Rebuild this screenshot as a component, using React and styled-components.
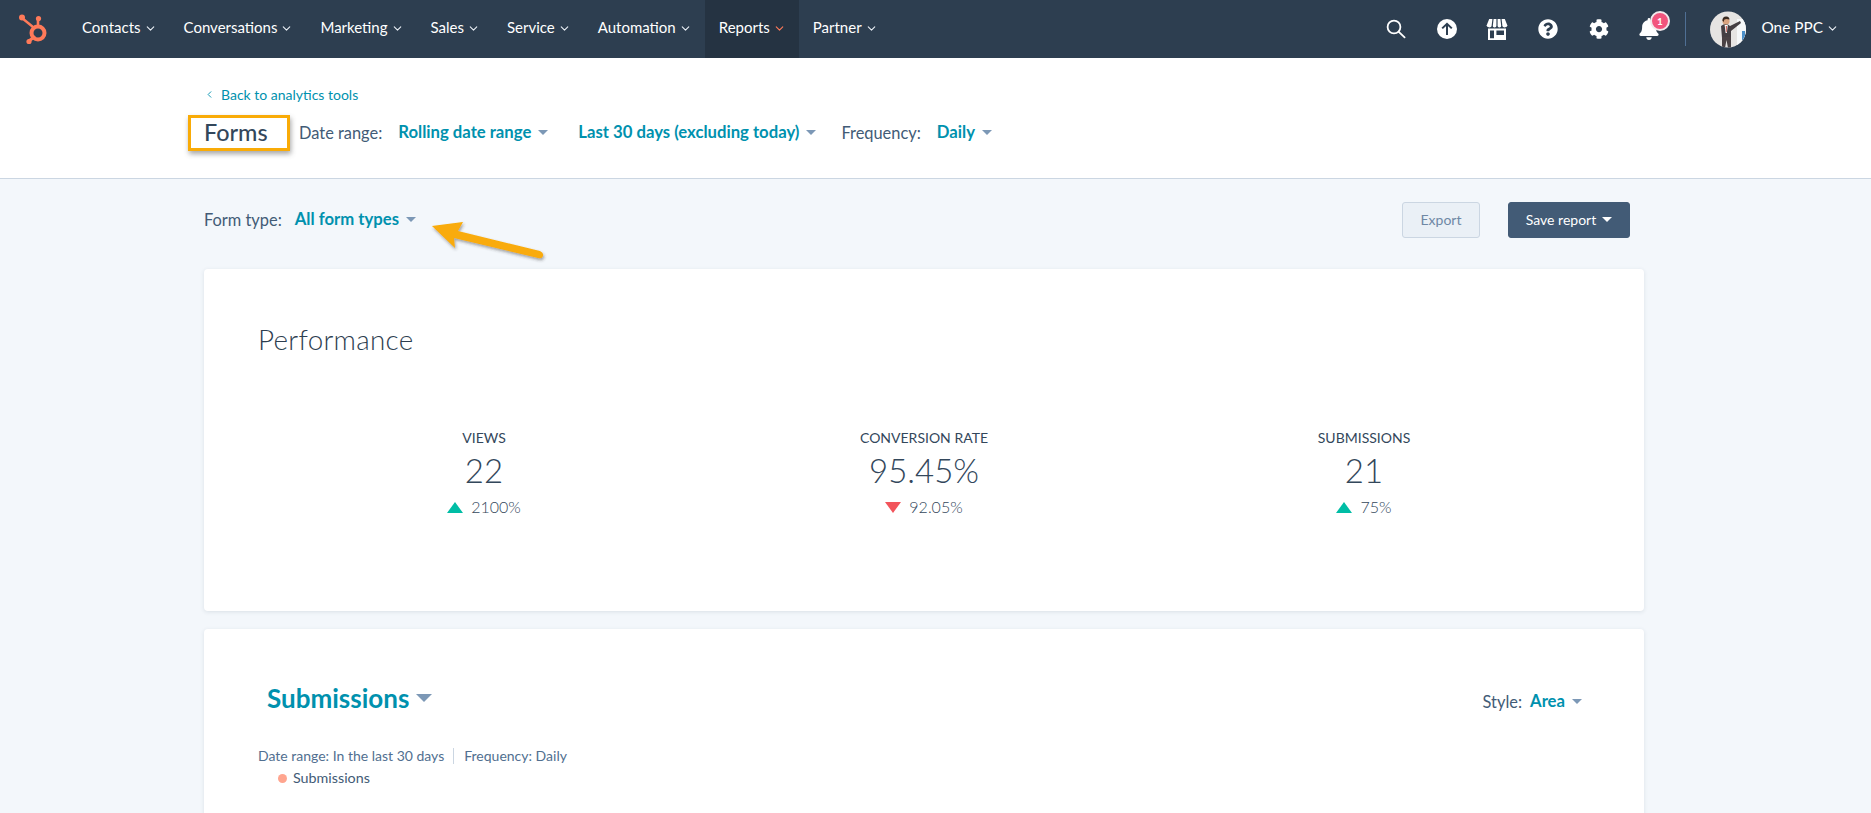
import React from 'react';
import styled, { createGlobalStyle } from 'styled-components';
import { FaBell, FaCog, FaQuestionCircle } from 'react-icons/fa';
import { FiChevronDown, FiChevronLeft } from 'react-icons/fi';

const GlobalStyle = createGlobalStyle`
    html, body {
        margin: 0;
        padding: 0;
        height: 100%;
        overflow: hidden;
    }
    body {
        font-family: "Lato", "Open Sans", sans-serif;
        color: #33475b;
        background-color: #f3f7fb;
    }
    * {
        box-sizing: border-box;
    }
`;

const Page = styled.div`
    position: relative;
    height: 813px;
    overflow: hidden;
`;

const Nav = styled.nav`
    height: 58px;
    display: flex;
    align-items: stretch;
    background-color: #2d3e50;
`;

const LogoBox = styled.div`
    width: 68px;
    flex: none;
`;

const NavItem = styled.div`
    display: flex;
    align-items: center;
    gap: 3px;
    padding: 0 13px 4px 14px;
    font-size: 15px;
    color: #fff;
    background-color: ${(props) => (props.$active ? '#253342' : 'transparent')};
    svg {
        color: ${(props) => (props.$active ? '#ff7a59' : '#eaf0f6')};
        margin-top: 3px;
    }
`;

const NavRight = styled.div`
    margin-left: auto;
    padding-right: 32px;
    display: flex;
    align-items: center;
`;

const IconSlot = styled.div`
    position: relative;
    width: 50.6px;
    height: 58px;
    display: flex;
    align-items: center;
    justify-content: center;
    color: #fff;
`;

const Badge = styled.span`
    position: absolute;
    top: 11px;
    left: 26px;
    width: 20px;
    height: 20px;
    border-radius: 50%;
    border: 2px solid #f3e9ec;
    background-color: #f2547d;
    color: #fff;
    font-size: 10px;
    font-weight: 700;
    display: flex;
    align-items: center;
    justify-content: center;
`;

const NavDivider = styled.div`
    width: 1px;
    height: 34px;
    margin: 0 24px 0 11px;
    background-color: #4f6f94;
`;

const UserName = styled.div`
    margin-left: 15px;
    display: flex;
    align-items: center;
    gap: 3px;
    padding-bottom: 4px;
    font-size: 15.4px;
    color: #fff;
    svg {
        color: #eaf0f6;
        margin-top: 3px;
    }
`;

const Header = styled.header`
    height: 121px;
    padding: 26px 0 0 204px;
    background-color: #fff;
    border-bottom: 1px solid #cbd6e2;
`;

const BackLink = styled.div`
    height: 20px;
    display: flex;
    align-items: center;
    gap: 6px;
    margin-bottom: 10px;
    font-size: 14px;
    color: #0091ae;
`;

const FilterRow = styled.div`
    display: flex;
    align-items: center;
`;

const TitleBox = styled.div`
    width: 102px;
    height: 36px;
    margin: 1px 9px -1px -16px;
    padding: 0 0 3px 13px;
    display: flex;
    align-items: center;
    border: 3px solid #f9ab07;
    box-shadow: 1px 3px 5px rgba(60, 60, 60, 0.45);
    font-size: 23.4px;
    font-weight: 500;
    color: #33475b;
`;

const FilterLabel = styled.span`
    margin-right: ${(props) => props.$gap || 16}px;
    font-size: 16.4px;
    color: #425b76;
`;

const DropLink = styled.span`
    display: flex;
    align-items: center;
    gap: 7px;
    margin-right: ${(props) => props.$after || 0}px;
    font-size: 16.7px;
    font-weight: 700;
    color: #0091ae;
`;

const Caret = styled.i`
    width: 0;
    height: 0;
    border-left: ${(props) => props.$size || 5}px solid transparent;
    border-right: ${(props) => props.$size || 5}px solid transparent;
    border-top: ${(props) => props.$size || 5}px solid ${(props) => props.$color || '#7c98b6'};
`;

const Content = styled.main`
    width: 1440px;
    margin-left: 204px;
`;

const Toolbar = styled.div`
    height: 36px;
    margin: 23px 0 31px;
    padding-right: 14px;
    display: flex;
    align-items: center;
`;

const FormTypeFilter = styled.div`
    display: flex;
    align-items: center;
    padding-bottom: 2px;
`;

const ButtonGroup = styled.div`
    margin-left: auto;
    display: flex;
    gap: 28px;
`;

const Button = styled.button`
    height: 36px;
    width: ${(props) => (props.$primary ? 122 : 78)}px;
    padding: 0 0 2px;
    display: flex;
    align-items: center;
    justify-content: center;
    gap: 6px;
    border-radius: 3px;
    border: 1px solid ${(props) => (props.$primary ? '#425b76' : '#cbd6e2')};
    background-color: ${(props) => (props.$primary ? '#425b76' : '#eaf0f6')};
    color: ${(props) => (props.$primary ? '#fff' : '#6f88a5')};
    font-family: inherit;
    font-size: 14px;
`;

const Card = styled.section`
    background-color: #fff;
    border-radius: 4px;
    box-shadow: 0 1px 4px rgba(45, 62, 80, 0.12);
    margin-bottom: 18px;
    height: ${(props) => props.$height}px;
    padding: ${(props) => props.$top}px 62px 0 54px;
`;

const CardTitle = styled.h2`
    margin: 0;
    font-size: 27.8px;
    line-height: 32px;
    font-weight: 300;
    color: #2d3e50;
    letter-spacing: 0.3px;
`;

const Metrics = styled.div`
    margin: 72px 0 0 6px;
    display: grid;
    grid-template-columns: repeat(3, 440px);
`;

const Metric = styled.div`
    display: flex;
    flex-direction: column;
    align-items: center;
`;

const MetricLabel = styled.div`
    font-size: 14px;
    line-height: 20px;
    color: #33475b;
`;

const MetricValue = styled.div`
    margin-top: 2px;
    font-size: 33px;
    line-height: 40px;
    font-weight: 300;
    color: #33475b;
`;

const Delta = styled.div`
    margin-top: 7px;
    display: flex;
    align-items: center;
    gap: 8px;
    font-size: 16px;
    line-height: 20px;
    font-weight: 300;
    color: #33475b;
`;

const Triangle = styled.i`
    width: 0;
    height: 0;
    border-left: 8px solid transparent;
    border-right: 8px solid transparent;
    ${(props) =>
        props.$up
            ? 'border-bottom: 11px solid #00bda5;'
            : 'border-top: 11px solid #f2545b;'}
`;

const ChartHeader = styled.div`
    display: flex;
    align-items: center;
    justify-content: space-between;
    height: 32px;
    padding-left: 9px;
`;

const ChartTitle = styled.div`
    display: flex;
    align-items: center;
    gap: 7px;
    padding-bottom: 2px;
    font-size: 26px;
    font-weight: 700;
    color: #0091ae;
`;

const StylePicker = styled.div`
    display: flex;
    align-items: center;
    padding-top: 4px;
`;

const ChartMeta = styled.div`
    margin-top: 31px;
    display: flex;
    align-items: center;
    font-size: 14px;
    line-height: 20px;
    color: #516f90;
`;

const MetaDivider = styled.span`
    width: 1px;
    height: 16px;
    margin: 0 10px 0 9px;
    background-color: #cbd6e2;
`;

const Legend = styled.div`
    margin: 2px 0 0 20px;
    display: flex;
    align-items: center;
    gap: 6px;
    font-size: 14.3px;
    line-height: 20px;
    color: #425b76;
`;

const LegendDot = styled.i`
    width: 9px;
    height: 9px;
    border-radius: 50%;
    background-color: #ffa58f;
`;

const ArrowMark = styled.svg`
    position: absolute;
    left: 425px;
    top: 215px;
`;

const Logo = () => (
    <svg width="68" height="58" viewBox="0 0 68 58" fill="none">
        <g stroke="#ff7a59" strokeLinecap="round">
            <circle cx="38" cy="33" r="6.5" strokeWidth="4" />
            <path d="M22 18 L33 27" strokeWidth="2.4" />
            <path d="M38 19 V26" strokeWidth="2.6" />
            <path d="M29 41 L34 37" strokeWidth="3" />
        </g>
        <g fill="#ff7a59">
            <circle cx="22" cy="17.5" r="3" />
            <circle cx="38.5" cy="18.5" r="2.6" />
            <circle cx="29" cy="41.5" r="2.6" />
        </g>
    </svg>
);

const SearchIcon = () => (
    <svg width="20" height="20" viewBox="0 0 20 20" fill="none" stroke="#fff" strokeWidth="1.8" strokeLinecap="round">
        <circle cx="8" cy="8" r="6.4" />
        <path d="M12.8 12.8 L18.6 18.4" />
    </svg>
);

const UploadIcon = () => (
    <svg width="20" height="20" viewBox="0 0 20 20">
        <circle cx="10" cy="10" r="10" fill="#fff" />
        <path d="M10 16 V5 M5.2 9.4 L10 4.8 L14.8 9.4" fill="none" stroke="#2d3e50" strokeWidth="2" />
    </svg>
);

const StoreIcon = () => (
    <svg width="22" height="21" viewBox="0 0 22 21">
        <path fill="#fff" d="M3.2 0 H6.4 L5.6 7 Q5.4 8.4 3.4 8.4 Q0.6 8.4 0.6 6.6 Z" />
        <path fill="#fff" d="M7.6 0 H10.4 V7 Q10.4 8.4 8.6 8.4 Q6.6 8.4 6.8 7 Z" />
        <path fill="#fff" d="M11.6 0 H14.4 L15.2 7 Q15.4 8.4 13.4 8.4 Q11.6 8.4 11.6 7 Z" />
        <path fill="#fff" d="M15.6 0 H18.8 L21.4 6.6 Q21.4 8.4 18.6 8.4 Q16.6 8.4 16.4 7 Z" />
        <path fill="#fff" fillRule="evenodd" d="M2 9.6 H20 V21 H2 Z M4 11.6 V19.2 H8 V11.6 Z M10.4 11.6 V16 H18 V11.6 Z" />
    </svg>
);

const Avatar = () => (
    <svg width="36" height="37" viewBox="0 0 36 37">
        <defs>
            <clipPath id="avatarClip">
                <circle cx="18" cy="18.5" r="18" />
            </clipPath>
        </defs>
        <g clipPath="url(#avatarClip)">
            <rect width="36" height="37" fill="#e6e4e2" />
            <rect x="27" y="8" width="9" height="29" fill="#f6f8f9" />
            <rect x="32" y="20" width="3" height="9" fill="#4b8fc9" />
            <path d="M11 15 Q16 11 20 15 L30 10 L31 12 L21 20 V27 H12 Z" fill="#453f42" />
            <path d="M12 26 H21 V37 H18 L16.5 29 L15 37 H12 Z" fill="#4a4244" />
            <path d="M14.6 14 H17.8 L16.8 22 H15.6 Z" fill="#fff" />
            <path d="M15.8 15 H16.8 L16.6 21 H16 Z" fill="#c0392b" />
            <circle cx="16" cy="10" r="3.6" fill="#d9a47f" />
            <path d="M12.4 9.4 Q12.6 5.4 16.4 5.6 Q19.6 6 19.4 8.4 Q16 7.8 14.4 8.4 L13.6 11 Z" fill="#3a2a20" />
        </g>
    </svg>
);

const Arrow = () => (
    <ArrowMark width="130" height="56" viewBox="0 0 130 56">
        <defs>
            <filter id="arrowShadow" x="-10%" y="-20%" width="120%" height="150%">
                <feDropShadow dx="1" dy="2" stdDeviation="1.6" floodColor="#333" floodOpacity="0.45" />
            </filter>
        </defs>
        <path
            filter="url(#arrowShadow)"
            fill="#f9ab07"
            d="M7 11 L38 7 L33 16 L115 36 Q119 38 118 41 Q117 44 113 43 L29 23 L30 33 Z"
        />
    </ArrowMark>
);

const MENU = [
    { label: 'Contacts' },
    { label: 'Conversations' },
    { label: 'Marketing' },
    { label: 'Sales' },
    { label: 'Service' },
    { label: 'Automation' },
    { label: 'Reports', active: true },
    { label: 'Partner' },
];

const METRICS = [
    { label: 'VIEWS', value: '22', delta: '2100%', up: true },
    { label: 'CONVERSION RATE', value: '95.45%', delta: '92.05%', up: false },
    { label: 'SUBMISSIONS', value: '21', delta: '75%', up: true },
];

const App = () => {
    return (
        <Page>
            <GlobalStyle />
            <Nav>
                <LogoBox>
                    <Logo />
                </LogoBox>
                {MENU.map((item) => (
                    <NavItem key={item.label} $active={item.active}>
                        {item.label}
                        <FiChevronDown size={13} />
                    </NavItem>
                ))}
                <NavRight>
                    <IconSlot><SearchIcon /></IconSlot>
                    <IconSlot><UploadIcon /></IconSlot>
                    <IconSlot><StoreIcon /></IconSlot>
                    <IconSlot><FaQuestionCircle size={20} /></IconSlot>
                    <IconSlot><FaCog size={20} /></IconSlot>
                    <IconSlot>
                        <FaBell size={22} />
                        <Badge>1</Badge>
                    </IconSlot>
                    <NavDivider />
                    <Avatar />
                    <UserName>
                        One PPC
                        <FiChevronDown size={13} />
                    </UserName>
                </NavRight>
            </Nav>
            <Header>
                <BackLink>
                    <FiChevronLeft size={11} />
                    Back to analytics tools
                </BackLink>
                <FilterRow>
                    <TitleBox>Forms</TitleBox>
                    <FilterLabel>Date range:</FilterLabel>
                    <DropLink $after={30}>Rolling date range <Caret /></DropLink>
                    <DropLink $after={25}>Last 30 days (excluding today) <Caret /></DropLink>
                    <FilterLabel>Frequency:</FilterLabel>
                    <DropLink>Daily <Caret /></DropLink>
                </FilterRow>
            </Header>
            <Content>
                <Toolbar>
                    <FormTypeFilter>
                        <FilterLabel $gap={13}>Form type:</FilterLabel>
                        <DropLink>All form types <Caret /></DropLink>
                    </FormTypeFilter>
                    <ButtonGroup>
                        <Button>Export</Button>
                        <Button $primary>Save report <Caret $color="#fff" /></Button>
                    </ButtonGroup>
                </Toolbar>
                <Card $height={342} $top={55}>
                    <CardTitle>Performance</CardTitle>
                    <Metrics>
                        {METRICS.map((m) => (
                            <Metric key={m.label}>
                                <MetricLabel>{m.label}</MetricLabel>
                                <MetricValue>{m.value}</MetricValue>
                                <Delta>
                                    <Triangle $up={m.up} />
                                    {m.delta}
                                </Delta>
                            </Metric>
                        ))}
                    </Metrics>
                </Card>
                <Card $height={300} $top={54}>
                    <ChartHeader>
                        <ChartTitle>Submissions <Caret $size={8} /></ChartTitle>
                        <StylePicker>
                            <FilterLabel $gap={8}>Style:</FilterLabel>
                            <DropLink>Area <Caret /></DropLink>
                        </StylePicker>
                    </ChartHeader>
                    <ChartMeta>
                        Date range: In the last 30 days
                        <MetaDivider />
                        Frequency: Daily
                    </ChartMeta>
                    <Legend>
                        <LegendDot />
                        Submissions
                    </Legend>
                </Card>
            </Content>
            <Arrow />
        </Page>
    );
};

export default App;
